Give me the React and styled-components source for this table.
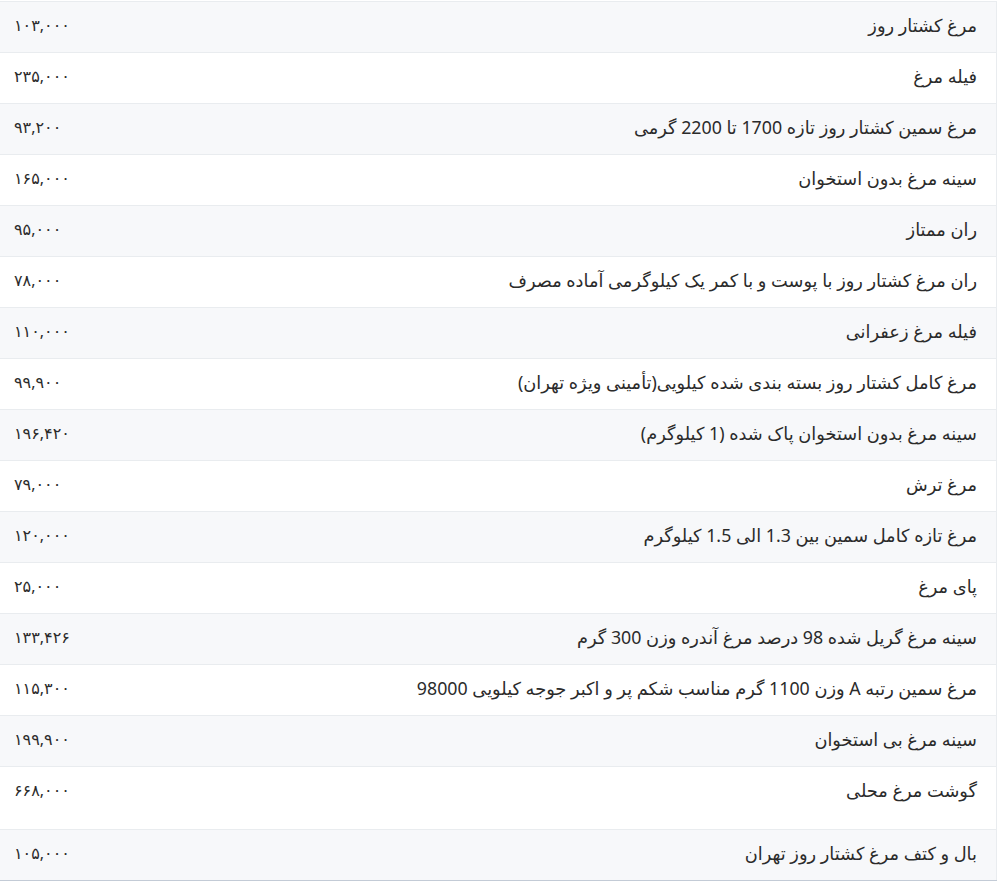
import styled, { createGlobalStyle } from "styled-components";

const GlobalStyle = createGlobalStyle`
  html, body {
    margin: 0;
    padding: 0;
    background: #ffffff;
  }
  body {
    font-family: "Noto Sans", "DejaVu Sans", sans-serif;
    color: #212529;
  }
`;

const prices = [
  { title: "مرغ کشتار روز", price: "۱۰۳,۰۰۰" },
  { title: "فیله مرغ", price: "۲۳۵,۰۰۰" },
  { title: "مرغ سمین کشتار روز تازه 1700 تا 2200 گرمی", price: "۹۳,۲۰۰" },
  { title: "سینه مرغ بدون استخوان", price: "۱۶۵,۰۰۰" },
  { title: "ران ممتاز", price: "۹۵,۰۰۰" },
  { title: "ران مرغ کشتار روز با پوست و با کمر یک کیلوگرمی آماده مصرف", price: "۷۸,۰۰۰" },
  { title: "فیله مرغ زعفرانی", price: "۱۱۰,۰۰۰" },
  { title: "مرغ کامل کشتار روز بسته بندی شده کیلویی(تأمینی ویژه تهران)", price: "۹۹,۹۰۰" },
  { title: "سینه مرغ بدون استخوان پاک شده (1 کیلوگرم)", price: "۱۹۶,۴۲۰" },
  { title: "مرغ ترش", price: "۷۹,۰۰۰" },
  { title: "مرغ تازه کامل سمین بین 1.3 الی 1.5 کیلوگرم", price: "۱۲۰,۰۰۰" },
  { title: "پای مرغ", price: "۲۵,۰۰۰" },
  { title: "سینه مرغ گریل شده 98 درصد مرغ آندره وزن 300 گرم", price: "۱۳۳,۴۲۶" },
  { title: "مرغ سمین رتبه A وزن 1100 گرم مناسب شکم پر و اکبر جوجه کیلویی 98000", price: "۱۱۵,۳۰۰" },
  { title: "سینه مرغ بی استخوان", price: "۱۹۹,۹۰۰" },
  { title: "گوشت مرغ محلی", price: "۶۶۸,۰۰۰", tall: true },
  { title: "بال و کتف مرغ کشتار روز تهران", price: "۱۰۵,۰۰۰" },
];

const App = () => {
  return (
    <>
      <GlobalStyle />
      <PageWrapper>
        <PriceTable>
          <tbody>
            {prices.map((item) => (
              <PriceRow key={item.title}>
                <TitleCell $tall={item.tall}>{item.title}</TitleCell>
                <PriceCell $tall={item.tall}>{item.price}</PriceCell>
              </PriceRow>
            ))}
          </tbody>
        </PriceTable>
      </PageWrapper>
    </>
  );
};

const PageWrapper = styled.div`
  width: 997px;
  padding-top: 1px;
`;

const PriceTable = styled.table`
  width: 100%;
  direction: rtl;
  border-collapse: collapse;
  border-top: 1px solid #e9ecef;
  border-right: 1px solid #e9ecef;
  border-bottom: 1px solid #c3cbd6;
  line-height: 24px;
`;

const PriceRow = styled.tr`
  background-color: #ffffff;
  border-bottom: 1px solid #e9ecef;

  &:nth-child(odd) {
    background-color: #f7f8fa;
  }

  &:last-child {
    border-bottom: 1px solid #c3cbd6;
  }
`;

const TitleCell = styled.td`
  vertical-align: top;
  text-align: right;
  font-size: 17.8px;
  padding: 11px 19px ${(p) => (p.$tall ? "27px" : "15px")} 12px;
  color: #2b2b2b;
  white-space: nowrap;
`;

const PriceCell = styled.td`
  width: 90px;
  vertical-align: top;
  text-align: left;
  font-size: 16px;
  padding: 11px 12px ${(p) => (p.$tall ? "27px" : "15px")} 14px;
  color: #2b2b2b;
  white-space: nowrap;
`;

export default App;
